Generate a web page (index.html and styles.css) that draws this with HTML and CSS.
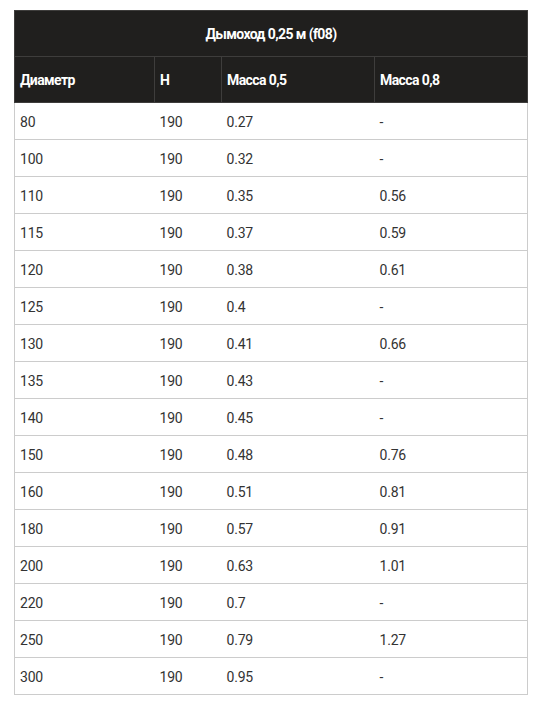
FILE: index.html
```html
<!DOCTYPE html>
<html lang="ru">
<head>
<meta charset="utf-8">
<link rel="stylesheet" href="styles.css">
</head>
<body>
<table class="spec">
  <colgroup>
    <col class="c1"><col class="c2"><col class="c3"><col class="c4">
  </colgroup>
  <thead>
    <tr class="title"><th colspan="4">Дымоход 0,25 м (f08)</th></tr>
    <tr class="head"><th>Диаметр</th><th>Н</th><th>Масса 0,5</th><th>Масса 0,8</th></tr>
  </thead>
  <tbody>
    <tr><td>80</td><td>190</td><td>0.27</td><td>-</td></tr>
    <tr><td>100</td><td>190</td><td>0.32</td><td>-</td></tr>
    <tr><td>110</td><td>190</td><td>0.35</td><td>0.56</td></tr>
    <tr><td>115</td><td>190</td><td>0.37</td><td>0.59</td></tr>
    <tr><td>120</td><td>190</td><td>0.38</td><td>0.61</td></tr>
    <tr><td>125</td><td>190</td><td>0.4</td><td>-</td></tr>
    <tr><td>130</td><td>190</td><td>0.41</td><td>0.66</td></tr>
    <tr><td>135</td><td>190</td><td>0.43</td><td>-</td></tr>
    <tr><td>140</td><td>190</td><td>0.45</td><td>-</td></tr>
    <tr><td>150</td><td>190</td><td>0.48</td><td>0.76</td></tr>
    <tr><td>160</td><td>190</td><td>0.51</td><td>0.81</td></tr>
    <tr><td>180</td><td>190</td><td>0.57</td><td>0.91</td></tr>
    <tr><td>200</td><td>190</td><td>0.63</td><td>1.01</td></tr>
    <tr><td>220</td><td>190</td><td>0.7</td><td>-</td></tr>
    <tr><td>250</td><td>190</td><td>0.79</td><td>1.27</td></tr>
    <tr><td>300</td><td>190</td><td>0.95</td><td>-</td></tr>
  </tbody>
</table>
</body>
</html>
```
FILE: styles.css
```css
html, body {
  margin: 0;
  padding: 0;
  background: #ffffff;
}
body {
  padding: 10px 12px 0 14px;
  font-family: Roboto, "Liberation Sans", sans-serif;
  font-size: 14px;
  color: #333333;
}
.spec {
  border-collapse: collapse;
  table-layout: fixed;
  width: 513px;
}
.c1 { width: 140px; }
.c2 { width: 67px; }
.c3 { width: 153px; }
.c4 { width: 153px; }
.spec th {
  background: #201f1e;
  color: #ffffff;
  font-weight: 700;
  letter-spacing: -0.6px;
  text-align: left;
  padding: 0 5px;
  border: 1px solid #3e3d3c;
}
.title th {
  text-align: center;
  height: 46px;
  box-sizing: border-box;
}
.head th {
  height: 46px;
  box-sizing: border-box;
}
.spec td {
  height: 37px;
  box-sizing: border-box;
  padding: 1px 5px 0;
  border: 1px solid #cccccc;
  border-left: none;
  border-right: none;
  color: #333333;
  letter-spacing: -0.2px;
}
.spec td:first-child { border-left: 1px solid #cccccc; }
.spec td:last-child { border-right: 1px solid #cccccc; }
```
